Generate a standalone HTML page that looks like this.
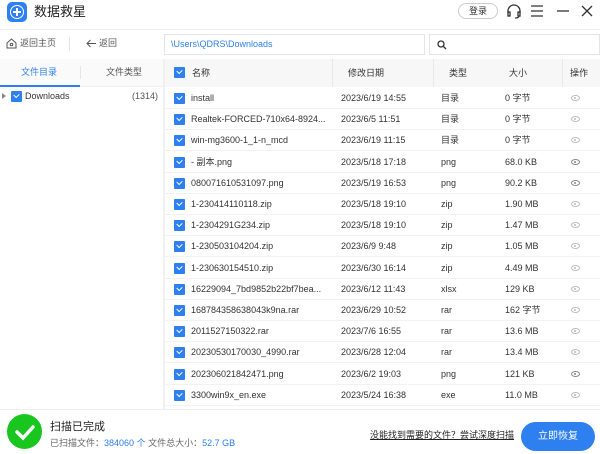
<!DOCTYPE html>
<html><head><meta charset="utf-8"><style>
*{margin:0;padding:0;box-sizing:border-box}
body{width:600px;height:454px;overflow:hidden;background:#fff;font-family:"Liberation Sans","Noto Sans CJK SC",sans-serif;font-size:9px;line-height:11px;color:#333;position:relative}
.a{position:absolute}
.cb{position:absolute;width:11px;height:11px;background:#2e7ff0;border-radius:1px}
.cb:after{content:"";position:absolute;left:3px;top:2px;width:4px;height:3px;border-left:1.3px solid #fff;border-bottom:1.3px solid #fff;transform:rotate(-45deg)}
.row{position:absolute;left:165px;width:435px;height:21px;border-bottom:1px solid #f2f2f2}
.row span{position:absolute;top:5px;white-space:nowrap;line-height:11px;height:11px}
.eye{position:absolute;left:406px;top:7px;width:9px;height:6px;border:1.3px solid #bbb;border-radius:50%}
.eye.d{border-color:#888}
.eye:after{content:"";position:absolute;left:2px;top:1px;width:2px;height:2px;background:#bbb;border-radius:50%}
.eye.d:after{background:#888}
</style></head><body>
<div class="a" style="left:7px;top:2px;width:20px;height:20px;border-radius:5px;background:#2e7ff0"></div>
<div class="a" style="left:10px;top:5px;width:14px;height:14px;border-radius:50%;border:1.5px solid #fff"></div>
<div class="a" style="left:16px;top:8px;width:2px;height:8px;background:#fff"></div>
<div class="a" style="left:13px;top:11px;width:8px;height:2px;background:#fff"></div>
<div class="a" style="left:34px;top:4px;font-size:13px;line-height:16px;color:#222">数据救星</div>
<div class="a" style="left:458px;top:3px;width:40px;height:16px;border:1px solid #ccc;border-radius:8px;font-size:9px;text-align:center;line-height:14px">登录</div>
<svg class="a" style="left:506px;top:3px" width="16" height="16" viewBox="0 0 16 16" fill="none" stroke="#333" stroke-width="1.3"><path d="M2 10V8a6 6 0 0 1 12 0v2"/><rect x="2" y="9" width="2" height="4"/><rect x="12" y="9" width="2" height="4"/><path d="M13 13q0 2-4 2"/></svg>
<svg class="a" style="left:530px;top:4px" width="14" height="14" stroke="#333" stroke-width="1.3"><path d="M1 2h12M1 7h12M1 12h12"/></svg>
<svg class="a" style="left:556px;top:4px" width="14" height="14" stroke="#333" stroke-width="1.3"><path d="M1 7h12"/></svg>
<svg class="a" style="left:580px;top:4px" width="14" height="14" stroke="#333" stroke-width="1.3"><path d="M2 2l10 10M12 2L2 12"/></svg>
<div class="a" style="left:0;top:29px;width:600px;height:1px;background:#eee"></div>
<svg class="a" style="left:6px;top:38px" width="11" height="11" fill="none" stroke="#555" stroke-width="1"><path d="M1 5L5.5 1 10 5V10H1z"/><circle cx="5.5" cy="6.5" r="1.3"/></svg>
<div class="a" style="left:20px;top:38px;color:#555">返回主页</div>
<div class="a" style="left:69px;top:37px;width:1px;height:14px;background:#e5e5e5"></div>
<svg class="a" style="left:86px;top:39px" width="11" height="9" fill="none" stroke="#555" stroke-width="1"><path d="M10 4.5H1M4.5 1L1 4.5 4.5 8"/></svg>
<div class="a" style="left:99px;top:38px;color:#555">返回</div>
<div class="a" style="left:164px;top:34px;width:261px;height:21px;border:1px solid #e5e5e5;color:#2e7ff0;padding:4px 6px;font-size:9px">\Users\QDRS\Downloads</div>
<div class="a" style="left:429px;top:34px;width:171px;height:21px;border:1px solid #e5e5e5"></div>
<svg class="a" style="left:437px;top:40px" width="10" height="10" fill="none" stroke="#333" stroke-width="1.3"><circle cx="4" cy="4" r="3"/><path d="M6.5 6.5L9 9"/></svg>
<div class="a" style="left:0;top:59px;width:163px;height:28px;background:#fafafa;border-bottom:1px solid #eee"></div>
<div class="a" style="left:21px;top:67px;color:#2e7ff0">文件目录</div>
<div class="a" style="left:106px;top:67px;color:#555">文件类型</div>
<div class="a" style="left:80px;top:66px;width:1px;height:13px;background:#e5e5e5"></div>
<div class="a" style="left:0;top:85px;width:80px;height:2px;background:#2e7ff0"></div>
<div class="a" style="left:2px;top:93px;border-left:4px solid #888;border-top:3px solid transparent;border-bottom:3px solid transparent"></div>
<div class="cb" style="left:11px;top:91px"></div>
<div class="a" style="left:25px;top:91px;color:#333">Downloads</div>
<div class="a" style="left:132px;top:91px;color:#555">(1314)</div>
<div class="a" style="left:163px;top:59px;width:2px;height:350px;background:#f0f0f0"></div>
<div class="a" style="left:165px;top:59px;width:435px;height:28px;background:#f7f7f7"></div>
<div class="cb" style="left:174px;top:67px"></div>
<div class="a" style="left:192px;top:68px">名称</div>
<div class="a" style="left:332px;top:59px;width:1px;height:28px;background:#e8e8e8"></div>
<div class="a" style="left:348px;top:68px">修改日期</div>
<div class="a" style="left:433px;top:59px;width:1px;height:28px;background:#e8e8e8"></div>
<div class="a" style="left:449px;top:68px">类型</div>
<div class="a" style="left:509px;top:68px">大小</div>
<div class="a" style="left:562px;top:59px;width:1px;height:28px;background:#e8e8e8"></div>
<div class="a" style="left:570px;top:68px">操作</div>
<div id="rows"></div>
<div class="a" style="left:0;top:409px;width:600px;height:1px;background:#eee"></div>
<div class="a" style="left:7px;top:414px;width:35px;height:35px;border-radius:50%;background:#19c51f"></div>
<svg class="a" style="left:7px;top:414px" width="35" height="35" fill="none" stroke="#fff" stroke-width="3.5" stroke-linecap="round"><path d="M10 18l6 6 10-11"/></svg>
<div class="a" style="left:50px;top:420px;font-size:11px;line-height:14px;color:#222">扫描已完成</div>
<div class="a" style="left:50px;top:438px;color:#666">已扫描文件：<span style="color:#2e7ff0">384060 个</span> 文件总大小：<span style="color:#2e7ff0">52.7 GB</span></div>
<div class="a" style="left:370px;top:430px;color:#222;text-decoration:underline">没能找到需要的文件？尝试深度扫描</div>
<div class="a" style="left:521px;top:422px;width:74px;height:29px;border-radius:15px;background:#2e7ff0;color:#fff;font-size:10px;text-align:center;line-height:29px">立即恢复</div>
<script>
var d=[["install","2023/6/19 14:55","目录","0 字节",0],["Realtek-FORCED-710x64-8924...","2023/6/5 11:51","目录","0 字节",0],["win-mg3600-1_1-n_mcd","2023/6/19 11:15","目录","0 字节",0],["- 副本.png","2023/5/18 17:18","png","68.0 KB",1],["080071610531097.png","2023/5/19 16:53","png","90.2 KB",1],["1-230414110118.zip","2023/5/18 19:10","zip","1.90 MB",0],["1-2304291G234.zip","2023/5/18 19:10","zip","1.47 MB",0],["1-230503104204.zip","2023/6/9 9:48","zip","1.05 MB",0],["1-230630154510.zip","2023/6/30 16:14","zip","4.49 MB",0],["16229094_7bd9852b22bf7bea...","2023/6/12 11:43","xlsx","129 KB",0],["168784358638043k9na.rar","2023/6/29 10:52","rar","162 字节",0],["2011527150322.rar","2023/7/6 16:55","rar","13.6 MB",0],["20230530170030_4990.rar","2023/6/28 12:04","rar","13.4 MB",0],["202306021842471.png","2023/6/2 19:03","png","121 KB",1],["3300win9x_en.exe","2023/5/24 16:38","exe","11.0 MB",0]];
var h="";d.forEach(function(r,i){var t=88+i*21.2;h+='<div class="row" style="top:'+t+'px"><div class="cb" style="left:9px;top:5px"></div><span style="left:26px">'+r[0]+'</span><span style="left:176px">'+r[1]+'</span><span style="left:276px">'+r[2]+'</span><span style="left:340px">'+r[3]+'</span><div class="eye'+(r[4]?' d':'')+'"></div></div>'});
document.getElementById("rows").innerHTML=h;
</script>
</body></html>
